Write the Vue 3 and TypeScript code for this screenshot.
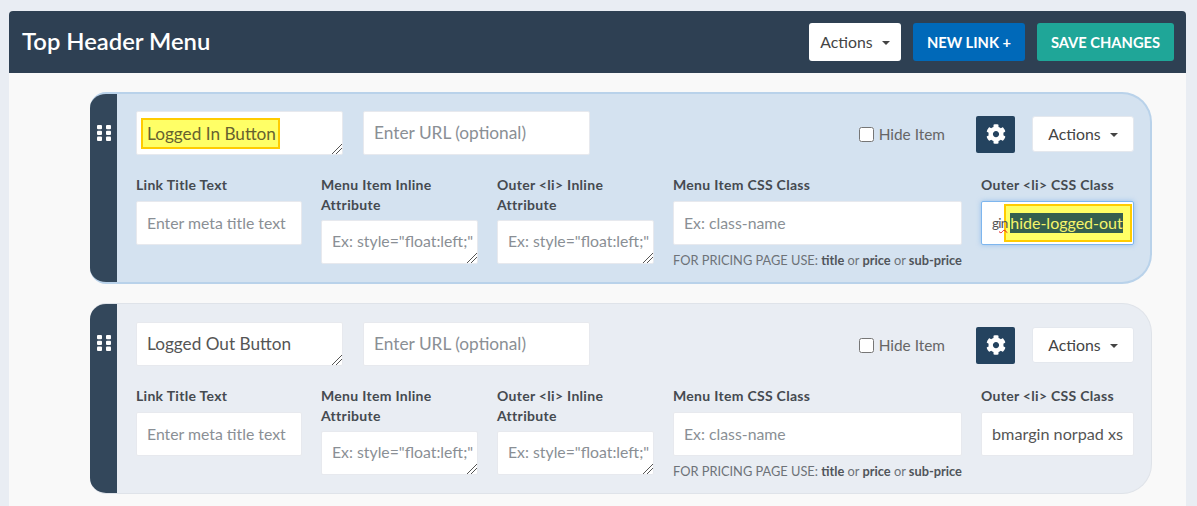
<script setup lang="ts">
interface Card { id: number; title: string; outer: string; active: boolean }
const cards: Card[] = [
  { id: 1, title: '', outer: '', active: true },
  { id: 2, title: 'Logged Out Button', outer: 'bmargin norpad xs', active: false },
]
</script>

<template>
  <div class="page">
    <section class="panel">
      <header class="head">
        <h1>Top Header Menu</h1>
        <div class="head-actions">
          <button class="btn white">Actions <i class="caret"></i></button>
          <button class="btn blue">NEW LINK +</button>
          <button class="btn teal">SAVE CHANGES</button>
        </div>
      </header>
      <div class="body">
        <article v-for="c in cards" :key="c.id" class="card" :class="{ active: c.active }">
          <div class="handle">
            <svg width="14" height="16" viewBox="0 0 14 16"><g fill="#fff">
              <rect x="0" y="0" width="5" height="4.300" rx="1"/><rect x="9" y="0" width="5" height="4.300" rx="1"/>
              <rect x="0" y="5.800" width="5" height="4.300" rx="1"/><rect x="9" y="5.800" width="5" height="4.300" rx="1"/>
              <rect x="0" y="11.600" width="5" height="4.300" rx="1"/><rect x="9" y="11.600" width="5" height="4.300" rx="1"/>
            </g></svg>
          </div>
          <div class="content">
            <div class="row-top">
              <div class="title-wrap">
                <textarea class="field title" :value="c.title" spellcheck="false"></textarea>
                <mark v-if="c.active" class="note note-title">Logged In Button</mark>
              </div>
              <input class="field url" placeholder="Enter URL (optional)" />
              <label class="hide"><input type="checkbox" /> Hide Item</label>
              <button class="gear" aria-label="Settings">
                <svg width="20" height="20" viewBox="0 0 512 512"><path fill="#fff" d="M487.4 315.7l-42.6-24.6c4.3-23.2 4.3-47 0-70.2l42.6-24.6c4.9-2.8 7.1-8.6 5.5-14-11.1-35.6-30-67.8-54.7-94.6-3.8-4.1-10-5.1-14.8-2.3L380.8 110c-17.9-15.4-38.5-27.3-60.8-35.1V25.800c0-5.600-3.900-10.500-9.400-11.700-36.700-8.200-74.300-7.800-109.200 0-5.500 1.200-9.400 6.100-9.400 11.700V75c-22.200 7.900-42.800 19.800-60.800 35.100L88.700 85.500c-4.900-2.800-11-1.900-14.800 2.300-24.700 26.700-43.600 58.900-54.700 94.600-1.700 5.400.6 11.200 5.500 14L67.300 221c-4.300 23.200-4.300 47 0 70.200l-42.600 24.600c-4.900 2.800-7.100 8.600-5.500 14 11.100 35.600 30 67.800 54.700 94.600 3.800 4.100 10 5.100 14.800 2.300l42.600-24.600c17.900 15.400 38.500 27.300 60.800 35.100v49.200c0 5.600 3.900 10.500 9.400 11.700 36.700 8.200 74.300 7.800 109.200 0 5.500-1.200 9.400-6.100 9.400-11.700v-49.200c22.200-7.900 42.800-19.800 60.800-35.100l42.600 24.600c4.900 2.800 11 1.900 14.800-2.300 24.700-26.700 43.600-58.900 54.700-94.600 1.500-5.500-.7-11.300-5.600-14.100zM256 336c-44.100 0-80-35.900-80-80s35.900-80 80-80 80 35.900 80 80-35.900 80-80 80z"/></svg>
              </button>
              <button class="btn white small">Actions <i class="caret"></i></button>
            </div>
            <div class="row-fields">
              <div class="col">
                <label>Link Title Text</label>
                <input class="field" placeholder="Enter meta title text" />
              </div>
              <div class="col">
                <label>Menu Item Inline Attribute</label>
                <textarea class="field attr" placeholder='Ex: style="float:left;"'></textarea>
              </div>
              <div class="col">
                <label>Outer &lt;li&gt; Inline Attribute</label>
                <textarea class="field attr" placeholder='Ex: style="float:left;"'></textarea>
              </div>
              <div class="col">
                <label>Menu Item CSS Class</label>
                <input class="field" placeholder="Ex: class-name" />
                <p class="hint">FOR PRICING PAGE USE: <b>title</b> or <b>price</b> or <b>sub-price</b></p>
              </div>
              <div class="col">
                <label>Outer &lt;li&gt; CSS Class</label>
                <div v-if="c.active" class="field focus">
                  <span class="typo">gin</span>
                  <mark class="note note-class"><span class="sel">hide-logged-out</span></mark>
                </div>
                <input v-else class="field outer" :value="c.outer" spellcheck="false" />
              </div>
            </div>
          </div>
        </article>
      </div>
    </section>
  </div>
</template>

<style>
html, body { margin: 0; background: #e9edf3; }
</style>

<style scoped>
.page {
  height: 506px;
  overflow: hidden;
  box-sizing: border-box;
  padding: 11px 11px 0 9px;
  font-family: Lato, "Open Sans", sans-serif;
  color: #444;
}
.panel { background: #f9f9f9; height: 520px; border-radius: 4px 4px 0 0; overflow: hidden; }
.head {
  height: 62px;
  background: #2e4053;
  display: flex;
  align-items: center;
  justify-content: space-between;
  padding: 0 12px 0 13px;
}
h1 { margin: 0 0 2px; color: #fff; font-size: 23.800px; font-weight: 600; }
.head-actions { display: flex; gap: 12px; }
.btn {
  height: 38px;
  border: 0;
  border-radius: 3px;
  font-family: inherit;
  font-size: 14.700px;
  font-weight: 700;
  padding: 0;
  color: #fff;
}
.white { background: #fff; color: #444; font-size: 15.800px; font-weight: 400; width: 92px; padding-bottom: 2px; }
.white.small { width: 102px; height: 36px; border: 1px solid #e4e8ee; }
.blue { background: #0069b9; width: 112px; }
.teal { background: #1fa698; width: 137px; }
.caret {
  display: inline-block;
  margin-left: 5px;
  vertical-align: 3px;
  border: 4.500px solid transparent;
  border-top-color: #444;
  border-bottom: 0;
}
.body { padding: 19px 34px 0 81px; display: flex; flex-direction: column; gap: 19px; }
.card {
  display: flex;
  border: 1px solid #dfe3e9;
  border-left: 0;
  border-radius: 16px 30px 30px 16px;
  background: #e9edf3;
  height: 189px;
  overflow: hidden;
}
.card.active {
  background: #d4e2f0;
  border-color: #b9d2ea;
  border-width: 2px 2px 2px 0;
  height: 188px;
}
.handle {
  width: 27px;
  flex: none;
  background: #33475b;
  display: flex;
  justify-content: center;
  padding-top: 31px;
  box-sizing: border-box;
}
.content { flex: 1; padding: 18px 17px 0 19px; min-width: 0; }
.card.active .content { padding-top: 17px; padding-right: 16px; }
.row-top { display: flex; align-items: center; }
.field {
  box-sizing: border-box;
  display: block;
  width: 100%;
  height: 44px;
  padding: 10px;
  border: 1px solid #e7e9ee;
  border-radius: 2px;
  background: #fff;
  font-family: inherit;
  font-size: 15.800px;
  color: #555;
  outline: none;
  resize: both;
  margin: 0;
}
input.field { resize: none; padding: 9px 10px 10px; }
.field::placeholder { color: #8a8f95; opacity: 1; }
textarea.field::-webkit-resizer {
  background: linear-gradient(135deg, transparent 64%, #555 64%, #555 68%, transparent 68%, transparent 79%, #555 79%, #555 83%, transparent 83%);
}
.attr { padding-right: 1px; }
.outer { font-size: 16.200px; }
.title-wrap { position: relative; width: 207px; flex: none; }
.title { font-size: 17.200px; }
.url { width: 227px; flex: none; margin-left: 20px; font-size: 17.300px; }
.hide { margin: 2px 0 0 auto; display: flex; align-items: center; gap: 5px; font-size: 15.400px; color: #666; }
.hide input { width: 15px; height: 15px; margin: 0; }
.gear {
  margin: 2px 0 0 31px;
  width: 39px;
  height: 37px;
  background: #24435f;
  border: 0;
  border-radius: 2px;
  display: flex;
  align-items: center;
  justify-content: center;
  padding: 0;
}
.small { margin: 2px 0 0 17px; }
.row-fields {
  display: grid;
  grid-template-columns: 166px 157px 157px 289px 153px;
  gap: 19px;
  margin-top: 20px;
}
.col label {
  display: block;
  font-size: 14px;
  letter-spacing: .3px;
  font-weight: 700;
  line-height: 19.500px;
  margin-bottom: 6px;
  color: #454a50;
}
.hint { margin: 7px 0 0; font-size: 12.800px; color: #6d7278; white-space: nowrap; }
.hint b { color: #50555b; font-weight: 700; }
.note {
  position: absolute;
  box-sizing: border-box;
  background: #ffff66;
  border: 2px solid #ffcc00;
  color: #66622f;
}
.note-title { left: 5px; top: 7px; width: 139px; height: 31px; padding: 3px 0 0 4px; font-size: 17.200px; line-height: 22px; }
.focus {
  position: relative;
  border: 1px solid #7eb6ee;
  box-shadow: 0 0 5px rgba(100, 165, 235, .55);
  overflow: hidden;
  padding: 0;
  font-size: 16px;
  resize: none;
}
.typo {
  position: absolute;
  z-index: 1;
  left: 10px;
  top: 0;
  line-height: 42px;
  font-size: 13.500px;
  letter-spacing: -.8px;
  white-space: nowrap;
  text-decoration: underline wavy #e02020 1px;
}
.note-class {
  left: 22px;
  right: 1px;
  top: 2px;
  height: 38px;
  display: flex;
  align-items: center;
  justify-content: center;
  white-space: nowrap;
  padding-right: 3px;
}
.sel { background: #355f4e; color: #f5f56a; line-height: 20px; }
</style>
